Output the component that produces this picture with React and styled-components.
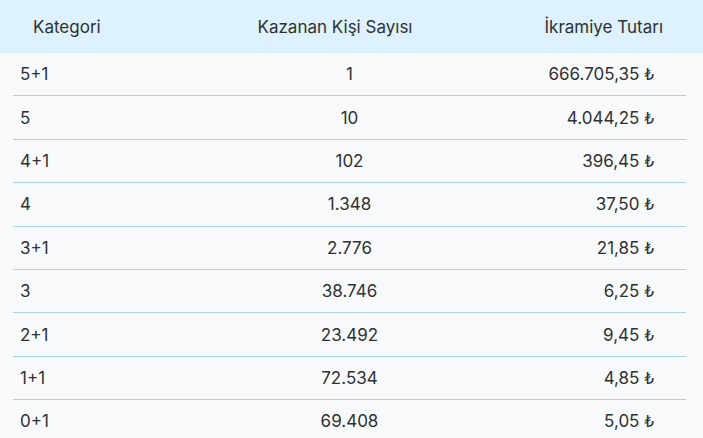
import React from 'react';
import styled, { createGlobalStyle } from 'styled-components';

const GlobalStyle = createGlobalStyle`
  *, *::before, *::after {
    box-sizing: border-box;
  }
  html, body {
    margin: 0;
    padding: 0;
    background: #f8f9fb;
  }
  body {
    font-family: Inter, "Noto Sans", "DejaVu Sans", sans-serif;
    color: #2f3133;
  }
`

const Wrapper = styled.div`
  width: 703px;
  height: 438px;
  overflow: hidden;
  background: #f8f9fb;
`

const HeaderRow = styled.div`
  display: grid;
  grid-template-columns: 225px 220px 258px;
  align-items: center;
  height: 53px;
  background: #ddf2fc;
  font-size: 17px;
`

const HeaderCell = styled.div`
  padding-left: ${props => props.$align === 'left' ? '33px' : '0'};
  padding-right: ${props => props.$align === 'right' ? '40px' : '0'};
  text-align: ${props => props.$align};
  white-space: nowrap;
`

const Body = styled.div`
  margin: 0 17px 0 13px;
`

const Row = styled.div`
  display: grid;
  grid-template-columns: repeat(3, 1fr);
  align-items: center;
  height: 43.4px;
  border-bottom: 1px solid #a9d6e6;
  font-size: 17px;
`

const Cell = styled.div`
  padding-left: ${props => props.$align === 'left' ? '7px' : '0'};
  padding-right: ${props => props.$align === 'right' ? '32px' : '0'};
  text-align: ${props => props.$align};
  white-space: nowrap;
`

const Lira = styled.span`
  font-family: "DejaVu Sans", sans-serif;
  font-size: 15px;
  margin-left: 5px;
`

const rows = [
  ['5+1', '1', '666.705,35'],
  ['5', '10', '4.044,25'],
  ['4+1', '102', '396,45'],
  ['4', '1.348', '37,50'],
  ['3+1', '2.776', '21,85'],
  ['3', '38.746', '6,25'],
  ['2+1', '23.492', '9,45'],
  ['1+1', '72.534', '4,85'],
  ['0+1', '69.408', '5,05'],
];

export default function App() {
  return (
    <Wrapper>
      <GlobalStyle />
      <HeaderRow>
        <HeaderCell $align="left">Kategori</HeaderCell>
        <HeaderCell $align="center">Kazanan Kişi Sayısı</HeaderCell>
        <HeaderCell $align="right">İkramiye Tutarı</HeaderCell>
      </HeaderRow>
      <Body>
        {rows.map(([cat, count, prize]) => (
          <Row key={cat}>
            <Cell $align="left">{cat}</Cell>
            <Cell $align="center">{count}</Cell>
            <Cell $align="right">{prize}<Lira>₺</Lira></Cell>
          </Row>
        ))}
      </Body>
    </Wrapper>
  )
}
